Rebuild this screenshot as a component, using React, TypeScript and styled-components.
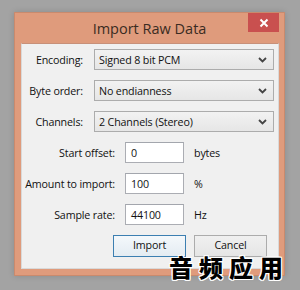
import styled, { createGlobalStyle } from 'styled-components';

const GlobalStyle = createGlobalStyle`
  html, body {
    margin: 0;
    padding: 0;
    background: #a3a3a3;
  }
  body {
    width: 300px;
    height: 290px;
    overflow: hidden;
    font-family: 'Open Sans', 'Noto Sans', sans-serif;
  }
`;

const Page = styled.div`
  padding: 12px 0 0 14px;
`;

const Window = styled.div`
  position: relative;
  box-sizing: border-box;
  width: 271px;
  height: 264px;
  background: #df9b7c;
  border: 1px solid #c98a6d;
  display: flex;
  flex-direction: column;
  box-shadow: 0 0 6px rgba(0, 0, 0, 0.15);
`;

const TitleBar = styled.div`
  position: relative;
  height: 29px;
  display: flex;
  align-items: center;
  justify-content: center;
  font-size: 14.5px;
  color: #3a2b22;
  padding-top: 1px;
`;

const CloseButton = styled.div`
  position: absolute;
  top: 0;
  right: 5px;
  width: 31px;
  height: 19px;
  background: #c9504f;
  display: flex;
  align-items: center;
  justify-content: center;
`;

const Content = styled.div`
  flex: 1;
  margin: 0 5px 6px 6px;
  background: #f0f0f0;
  border: 1px solid #d9d9d9;
  border-top-color: #c79079;
  padding: 5px 6px 0 0;
  font-size: 10.7px;
  letter-spacing: -0.15px;
  color: #111;
`;

const SelectRow = styled.div`
  display: grid;
  grid-template-columns: 61px 180px;
  column-gap: 11px;
  align-items: center;
  height: 21px;
  margin-bottom: 10px;
`;

const FieldRow = styled.div`
  display: grid;
  grid-template-columns: 93px 59px auto;
  column-gap: 10px;
  align-items: center;
  height: 21px;
  margin-bottom: 10px;
`;

const Label = styled.span`
  text-align: right;
  white-space: nowrap;
`;

const Select = styled.div`
  box-sizing: border-box;
  height: 21px;
  border: 1px solid #acacac;
  background: linear-gradient(to bottom, #f2f2f2 0%, #e6e6e6 100%);
  display: flex;
  align-items: center;
  justify-content: space-between;
  padding: 0 6px 0 4px;
  white-space: nowrap;
`;

const TextInput = styled.div`
  box-sizing: border-box;
  height: 21px;
  border: 1px solid #abadb3;
  border-top-color: #a3a6ad;
  background: #fff;
  display: flex;
  align-items: center;
  padding: 0 5px;
`;

const Unit = styled.span`
  white-space: nowrap;
`;

const ButtonRow = styled.div`
  display: flex;
  gap: 8px;
  padding-left: 91px;
  margin-top: 3px;
`;

const Button = styled.div<{ $default?: boolean }>`
  box-sizing: border-box;
  width: 73px;
  height: 22px;
  line-height: 13px;
  border: 1px solid ${(p) => (p.$default ? '#3c7fb1' : '#acacac')};
  background: ${(p) =>
    p.$default
      ? 'linear-gradient(to bottom, #f4f8fb 0%, #e4ecf2 100%)'
      : 'linear-gradient(to bottom, #f0f0f0 0%, #e5e5e5 100%)'};
  display: flex;
  align-items: center;
  justify-content: center;
  padding-bottom: 1px;
`;

const Watermark = styled.div`
  position: absolute;
  left: 154px;
  top: 244px;
  font-family: 'Noto Sans CJK SC', sans-serif;
  font-weight: 900;
  font-size: 24px;
  line-height: 20px;
  letter-spacing: 6px;
  color: #000;
  white-space: nowrap;
  text-shadow: -1px -1px 0 #fff, 1px -1px 0 #fff, -1px 1px 0 #fff, 1px 1px 0 #fff,
    0 -1px 0 #fff, 0 1px 0 #fff, -1px 0 0 #fff, 1px 0 0 #fff;
`;

const Chevron = () => (
  <svg width="9" height="6" viewBox="0 0 9 6">
    <path d="M1 1 L4.5 4.5 L8 1" fill="none" stroke="#444" strokeWidth="1.8" />
  </svg>
);

const selects = [
  { label: 'Encoding:', value: 'Signed 8 bit PCM' },
  { label: 'Byte order:', value: 'No endianness' },
  { label: 'Channels:', value: '2 Channels (Stereo)' },
];

const fields = [
  { label: 'Start offset:', value: '0', unit: 'bytes' },
  { label: 'Amount to import:', value: '100', unit: '%' },
  { label: 'Sample rate:', value: '44100', unit: 'Hz' },
];

export default function App() {
  return (
    <Page>
      <GlobalStyle />
      <Window>
        <TitleBar>
          Import Raw Data
          <CloseButton>
            <svg width="10" height="10" viewBox="0 0 10 10">
              <path d="M1.5 1.5 L8.5 8.5 M8.5 1.5 L1.5 8.5" stroke="#fff" strokeWidth="2" />
            </svg>
          </CloseButton>
        </TitleBar>
        <Content>
          {selects.map((s) => (
            <SelectRow key={s.label}>
              <Label>{s.label}</Label>
              <Select>
                <span>{s.value}</span>
                <Chevron />
              </Select>
            </SelectRow>
          ))}
          {fields.map((f) => (
            <FieldRow key={f.label}>
              <Label>{f.label}</Label>
              <TextInput>{f.value}</TextInput>
              <Unit>{f.unit}</Unit>
            </FieldRow>
          ))}
          <ButtonRow>
            <Button $default>Import</Button>
            <Button>Cancel</Button>
          </ButtonRow>
        </Content>
        <Watermark>音频应用</Watermark>
      </Window>
    </Page>
  );
}
